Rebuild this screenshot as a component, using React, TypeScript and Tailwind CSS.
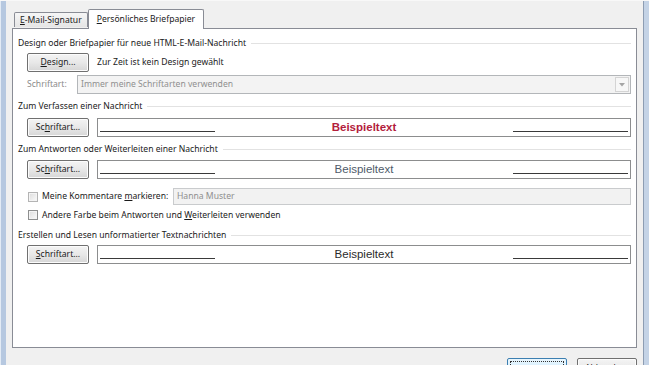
import React from 'react'

function U({ children }: { children: React.ReactNode }) {
  return <span className="underline underline-offset-[1px]">{children}</span>
}

function SectionHeader({ title }: { title: string }) {
  return (
    <div className="flex h-[16px] items-center gap-[5px] pl-[5px] pr-[5px]">
      <span className="whitespace-nowrap">{title}</span>
      <div className="h-px flex-1 bg-[#e2e2e2]" />
    </div>
  )
}

function WinButton({ children, className = '' }: { children: React.ReactNode; className?: string }) {
  return (
    <div
      className={`flex h-[19px] items-center justify-center rounded-[2px] border border-[#707070] bg-gradient-to-b from-[#f4f4f4] via-[#e8e8e8] to-[#d6d6d6] shadow-[inset_0_0_0_1px_#fcfcfc] ${className}`}
    >
      {children}
    </div>
  )
}

function Preview({ variant }: { variant: 'red' | 'blue' | 'plain' }) {
  const textCls =
    variant === 'red'
      ? 'font-bold text-[#b3203c]'
      : variant === 'blue'
        ? 'text-[#4f5b6b]'
        : 'text-[#2b2b2b]'
  return (
    <div className="flex h-[19px] flex-1 items-center border border-[#8c8d8e] bg-white px-[2px]">
      <div className="mt-[7px] h-px w-[115px] bg-[#3a3a3a]" />
      <div className="flex flex-1 justify-center">
        <span className={`font-['Liberation_Sans',sans-serif] text-[11.5px] ${textCls}`}>Beispieltext</span>
      </div>
      <div className="mt-[7px] h-px w-[115px] bg-[#3a3a3a]" />
    </div>
  )
}

function Checkbox({ disabled = false }: { disabled?: boolean }) {
  return (
    <div
      className={`h-[10px] w-[10px] border ${disabled ? 'border-[#b4b4b4]' : 'border-[#8e8f8f]'} bg-gradient-to-br from-[#dcdcdc] to-[#fbfbfb] shadow-[inset_0_0_0_1px_#f4f4f4]`}
    />
  )
}

export default function App() {
  return (
    <div className="flex h-[365px] w-[649px] overflow-hidden border-t border-[#f8f8f8] bg-[#f0f0f0] font-['Noto_Sans',sans-serif] text-[8.6px] text-[#1a1a1a]">
      {/* left window frame */}
      <div className="w-[6px] border-l border-[#e3ebf5] bg-[#b6c8e0]" />

      <div className="flex flex-1 flex-col pl-[6px] pr-[6px]">
        {/* tabs */}
        <div className="flex h-[27px] shrink-0 items-end pl-[2px] pt-[7px]">
          <div className="mb-px flex h-[15px] items-center rounded-t-[2px] border border-b-0 border-[#898c95] bg-gradient-to-b from-[#f6f6f6] to-[#e5e5e5] px-[5px]">
            <span>
              <U>E</U>-Mail-Signatur
            </span>
          </div>
          <div className="relative z-10 -mb-px flex h-[20px] items-center rounded-t-[2px] border border-b-0 border-[#898c95] bg-white px-[8px]">
            <span>
              <U>P</U>ersönliches Briefpapier
            </span>
          </div>
        </div>

        {/* panel */}
        <div className="flex h-[320px] shrink-0 flex-col border border-[#898c95] bg-white">
          <div className="mt-[6px]">
            <SectionHeader title="Design oder Briefpapier für neue HTML-E-Mail-Nachricht" />
          </div>

          <div className="mt-[2px] flex items-center pl-[14px] pr-[5px]">
            <WinButton className="w-[62px]">
              <span>
                <U>D</U>esign...
              </span>
            </WinButton>
            <span className="ml-[8px]">Zur Zeit ist kein Design gewählt</span>
          </div>

          <div className="mt-[3px] flex items-center pl-[14px] pr-[5px]">
            <span className="w-[50px] text-[#8b8b8b]">Schriftart:</span>
            <div className="flex h-[19px] flex-1 items-center border border-[#b3b6b9] bg-[#f3f3f3] pl-[3px] pr-px">
              <span className="flex-1 text-[#8f8f8f]">Immer meine Schriftarten verwenden</span>
              <div className="flex h-[15px] w-[14px] items-center justify-center border border-[#d4d4d4] bg-[#f7f7f7]">
                <svg width="6" height="4" viewBox="0 0 6 4">
                  <path d="M0 0h6L3 3.5z" fill="#a5a5a5" />
                </svg>
              </div>
            </div>
          </div>

          <div className="mt-[4px]">
            <SectionHeader title="Zum Verfassen einer Nachricht" />
          </div>
          <div className="mt-[4px] flex items-center gap-[8px] pl-[14px] pr-[5px]">
            <WinButton className="w-[62px]">
              <span>
                Sc<U>h</U>riftart...
              </span>
            </WinButton>
            <Preview variant="red" />
          </div>

          <div className="mt-[4px]">
            <SectionHeader title="Zum Antworten oder Weiterleiten einer Nachricht" />
          </div>
          <div className="mt-[3px] flex items-center gap-[8px] pl-[14px] pr-[5px]">
            <WinButton className="w-[62px]">
              <span>
                Sc<U>h</U>riftart...
              </span>
            </WinButton>
            <Preview variant="blue" />
          </div>

          <div className="mt-[9px] flex h-[17px] items-center pl-[15px] pr-[5px]">
            <Checkbox disabled />
            <span className="ml-[4px] w-[131px]">
              Meine Kommentare <U>m</U>arkieren:
            </span>
            <div className="flex h-[17px] flex-1 items-center border border-[#c9cbcd] bg-[#f2f2f2] pl-[3px] text-[#8f8f8f]">
              Hanna Muster
            </div>
          </div>

          <div className="mt-[2px] flex h-[16px] items-center pl-[15px] pr-[5px]">
            <Checkbox />
            <span className="ml-[4px]">
              Andere Farbe beim Antworten und <U>W</U>eiterleiten verwenden
            </span>
          </div>

          <div className="mt-[4px]">
            <SectionHeader title="Erstellen und Lesen unformatierter Textnachrichten" />
          </div>
          <div className="mt-[2px] flex items-center gap-[8px] pl-[14px] pr-[5px]">
            <WinButton className="w-[62px]">
              <span>
                <U>S</U>chriftart...
              </span>
            </WinButton>
            <Preview variant="plain" />
          </div>
        </div>

        {/* dialog buttons */}
        <div className="mt-[10px] flex shrink-0 justify-end gap-[10px]">
          <div className="flex h-[22px] w-[60px] items-start justify-center rounded-[2px] border border-[#3c7fb1] bg-gradient-to-b from-[#eaf6fd] to-[#bee6fd] p-[2px]">
            <div className="flex h-full w-full justify-center border border-dotted border-[#333]">
              <span className="pt-[2px]">OK</span>
            </div>
          </div>
          <WinButton className="h-[22px] w-[60px] items-start pt-[3px]">
            <span>Abbrechen</span>
          </WinButton>
        </div>
      </div>

      {/* right window frame */}
      <div className="w-[6px] border-l border-[#8d9db3] bg-[#c4d3e6]" />
    </div>
  )
}
